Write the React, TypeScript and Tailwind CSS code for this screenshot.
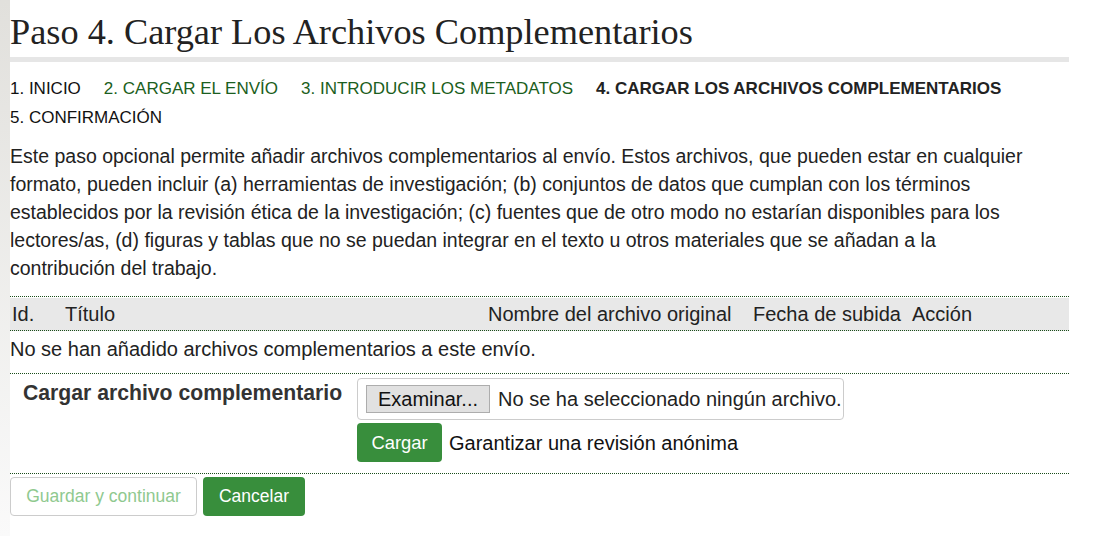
import React from 'react'

const steps = [
  { label: '1. INICIO', tone: 'plain' },
  { label: '2. CARGAR EL ENVÍO', tone: 'link' },
  { label: '3. INTRODUCIR LOS METADATOS', tone: 'link' },
  { label: '4. CARGAR LOS ARCHIVOS COMPLEMENTARIOS', tone: 'current' },
  { label: '5. CONFIRMACIÓN', tone: 'plain' },
]

const stepClass: Record<string, string> = {
  plain: 'text-[#111]',
  link: 'text-[#1b5e20]',
  current: 'font-bold text-[#222]',
}

export default function App() {
  return (
    <div className="flex min-h-[536px] bg-white font-['Liberation_Sans',Arial,sans-serif] text-[#222]">
      <div className="w-[10px] shrink-0 bg-gradient-to-b from-[#e1e0dc] to-[#fafafa]" />

      <main className="w-[1059px] shrink-0">
        <h1 className="pt-[10px] font-['Liberation_Serif','Times_New_Roman',serif] text-[36.3px] leading-[44px] text-[#222]">
          Paso 4. Cargar Los Archivos Complementarios
        </h1>
        <div className="mt-[3px] h-[5px] bg-[#e6e6e6]" />

        <ul className="mt-[12px] flex flex-wrap gap-x-[23px] text-[17px] leading-[29px]">
          {steps.map((step) => (
            <li key={step.label} className={stepClass[step.tone]}>
              {step.label}
            </li>
          ))}
        </ul>

        <p className="mt-[10px] text-[19.5px] leading-[28px]">
          Este paso opcional permite añadir archivos complementarios al envío. Estos archivos, que pueden estar en cualquier
          <br />
          formato, pueden incluir (a) herramientas de investigación; (b) conjuntos de datos que cumplan con los términos
          <br />
          establecidos por la revisión ética de la investigación; (c) fuentes que de otro modo no estarían disponibles para los
          <br />
          lectores/as, (d) figuras y tablas que no se puedan integrar en el texto u otros materiales que se añadan a la
          <br />
          contribución del trabajo.
        </p>

        <div className="mt-[14px] border-t border-dotted border-[#1a4d1a] pt-[1px]">
          <div className="grid grid-cols-[53px_423px_265px_159px_1fr] border-b border-dotted border-[#1a4d1a] bg-[#e8e8e8] pl-[2px] text-[20px] leading-[32px]">
            <span>Id.</span>
            <span>Título</span>
            <span>Nombre del archivo original</span>
            <span>Fecha de subida</span>
            <span>Acción</span>
          </div>
          <div className="border-b border-dotted border-[#1a4d1a] pb-[10px] pt-[4px] text-[20px] leading-[28px]">
            No se han añadido archivos complementarios a este envío.
          </div>
        </div>

        <div className="flex border-b border-dotted border-[#1a4d1a] pb-[11px] pt-[4px]">
          <div className="w-[347px] shrink-0 pl-[13px] pt-[1px] text-[21.2px] font-bold leading-[28px] text-[#333]">
            Cargar archivo complementario
          </div>
          <div className="flex flex-col items-start gap-[3px]">
            <div className="flex items-center gap-[8px] whitespace-nowrap rounded-[4px] border border-[#cccccc] py-[6px] pl-[8px] pr-[1px] text-[20px] leading-[24px]">
              <span className="border border-[#adadad] bg-[#e1e1e1] px-[11px] py-[1px] text-[#111]">Examinar...</span>
              <span className="text-[#222]">No se ha seleccionado ningún archivo.</span>
            </div>
            <div className="flex items-center gap-[7px]">
              <button className="h-[39px] w-[85px] rounded-[4px] bg-[#388e3c] text-[18.4px] text-white">Cargar</button>
              <span className="text-[20px] text-[#111]">Garantizar una revisión anónima</span>
            </div>
          </div>
        </div>

        <div className="mt-[3px] flex gap-[6px]">
          <button className="h-[39px] w-[187px] rounded-[4px] border border-[#cccccc] bg-white text-[17.5px] text-[#8fc98f]">
            Guardar y continuar
          </button>
          <button className="h-[39px] w-[102px] rounded-[4px] bg-[#388e3c] text-[17.5px] text-white">Cancelar</button>
        </div>
      </main>
    </div>
  )
}
